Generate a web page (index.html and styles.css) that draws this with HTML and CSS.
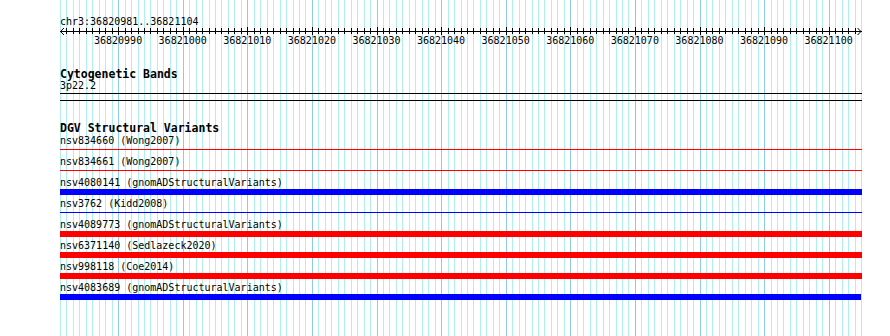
FILE: index.html
```html
<!DOCTYPE html>
<html lang="en">
<head>
    <meta charset="UTF-8">
    <title>chr3:36820981..36821104</title>
    <link rel="stylesheet" href="styles.css">
</head>
<body>
    <div class="view">
        <svg class="grid-lines" id="grid" width="802" height="336"></svg>

        <div class="tracks">
            <!-- ruler -->
            <div class="ref-name">chr3:36820981..36821104</div>
            <svg class="scale" id="scale" width="802" height="8"></svg>
            <div class="scale-labels">
                <span>36820990</span>
                <span>36821000</span>
                <span>36821010</span>
                <span>36821020</span>
                <span>36821030</span>
                <span>36821040</span>
                <span>36821050</span>
                <span>36821060</span>
                <span>36821070</span>
                <span>36821080</span>
                <span>36821090</span>
                <span>36821100</span>
            </div>

            <!-- cytogenetic bands -->
            <div class="track cyto">
                <div class="track-title">Cytogenetic Bands</div>
                <div class="feature-label">3p22.2</div>
                <div class="band"></div>
            </div>
            <div class="track-sep"></div>

            <!-- DGV -->
            <div class="track dgv">
                <div class="track-title">DGV Structural Variants</div>
                <div class="feature">
                    <div class="feature-label">nsv834660 (Wong2007)</div>
                    <div class="line red"></div>
                </div>
                <div class="feature">
                    <div class="feature-label">nsv834661 (Wong2007)</div>
                    <div class="line red"></div>
                </div>
                <div class="feature">
                    <div class="feature-label">nsv4080141 (gnomADStructuralVariants)</div>
                    <div class="bar blue"></div>
                </div>
                <div class="feature">
                    <div class="feature-label">nsv3762 (Kidd2008)</div>
                    <div class="line blue"></div>
                </div>
                <div class="feature">
                    <div class="feature-label">nsv4089773 (gnomADStructuralVariants)</div>
                    <div class="bar red"></div>
                </div>
                <div class="feature">
                    <div class="feature-label">nsv6371140 (Sedlazeck2020)</div>
                    <div class="bar red"></div>
                </div>
                <div class="feature">
                    <div class="feature-label">nsv998118 (Coe2014)</div>
                    <div class="bar red"></div>
                </div>
                <div class="feature">
                    <div class="feature-label">nsv4083689 (gnomADStructuralVariants)</div>
                    <div class="bar blue short"></div>
                </div>
            </div>
        </div>
    </div>

    <script>
        // 124 bp drawn across 802px
        const bpCount = 124;
        const bpWidth = 801 / bpCount;

        let gridLines = '';
        let ticks = '';
        for (let i = 0; i <= bpCount; i++) {
            const x = Math.round(i * bpWidth) + 0.5;
            const major = (i + 1) % 10 === 0;
            gridLines += `<line x1="${x}" y1="0" x2="${x}" y2="336" class="${major ? 'major' : 'minor'}"/>`;
            if (i > 0 && i < bpCount) {
                ticks += major
                    ? `<line x1="${x}" y1="0" x2="${x}" y2="8"/>`
                    : `<line x1="${x}" y1="1" x2="${x}" y2="7"/>`;
            }
        }
        document.getElementById('grid').innerHTML = gridLines;

        // axis line with arrows at both ends
        ticks += '<line x1="0" y1="4.5" x2="802" y2="4.5"/>';
        ticks += '<path d="M4 1 L0.5 4.5 L4 8" fill="none"/>';
        ticks += '<path d="M797.5 1 L801 4.5 L797.5 8" fill="none"/>';
        document.getElementById('scale').innerHTML = ticks;
    </script>
</body>
</html>
```

FILE: styles.css
```css
body {
    margin: 0;
    font-family: "DejaVu Sans Mono", monospace;
    font-size: 10px;
    color: #000;
    background-color: #fff;
    overflow: hidden;
}

.view {
    display: grid;
    width: 802px;
    height: 336px;
    margin-left: 60px;
}
.grid-lines, .tracks {
    grid-area: 1 / 1;
}
.grid-lines {
    display: block;
    shape-rendering: crispEdges;
}
.grid-lines .minor {
    stroke: #b0eef3;
    stroke-width: 1;
}
.grid-lines .major {
    stroke: #8ccbea;
    stroke-width: 1;
}

/* ruler */
.ref-name {
    padding-top: 16px;
    line-height: 12px;
}
.scale {
    display: block;
    margin-top: -1px;
    shape-rendering: crispEdges;
    stroke: #000;
    stroke-width: 1;
}
.scale path {
    shape-rendering: auto;
}
.scale-labels {
    display: grid;
    grid-template-columns: repeat(12, 64.597px);
    padding-left: 25.8px;
    line-height: 12px;
    text-align: center;
}

/* tracks */
.track {
    margin-top: 22px;
}
.track-title {
    font-weight: bold;
    font-size: 11.5px;
    line-height: 11px;
}
.feature-label {
    line-height: 11px;
    white-space: nowrap;
}
.band {
    height: 1px;
    margin-top: 2px;
    background-color: #000;
}
.track-sep {
    height: 1px;
    margin-top: 6px;
    background-color: #000;
}
.dgv .track-title {
    margin-bottom: 1px;
}
.line {
    height: 1px;
    margin: 3px 0 6px;
}
.bar {
    height: 6px;
    margin: 1px 0 3px;
}
.bar.short {
    margin-right: 1px;
}
.red {
    background-color: #ff0000;
}
.blue {
    background-color: #0000ff;
}
```
